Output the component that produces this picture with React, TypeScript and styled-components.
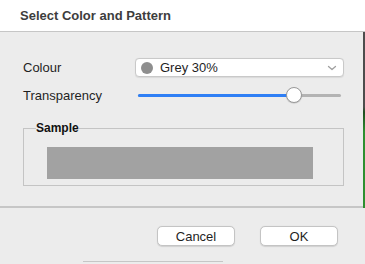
import React from "react";
import styled, { createGlobalStyle } from "styled-components";

const GlobalStyle = createGlobalStyle`
    html, body {
        margin: 0;
        padding: 0;
        background: #ececec;
    }
    body {
        font-family: "Liberation Sans", Arial, sans-serif;
        color: #1f1f1f;
    }
`;

const Window = styled.div`
    width: 365px;
    height: 264px;
    overflow: hidden;
    background: #ececec;
    display: flex;
    flex-direction: column;
`;

const TitleBar = styled.div`
    height: 32px;
    flex-shrink: 0;
    background: #ffffff;
    border-bottom: 1px solid #c6c6c6;
    box-sizing: border-box;
    padding-left: 20px;
    display: flex;
    align-items: center;
    font-size: 13px;
    font-weight: bold;
    color: #3d3d3d;
`;

const Body = styled.div`
    display: flex;
    height: 176px;
    flex-shrink: 0;
`;

const Panel = styled.div`
    flex: 1;
    box-sizing: border-box;
    padding: 26px 19px 0 23px;
    border-bottom: 2px solid #c6c6c6;
`;

const Edge = styled.div`
    width: 2px;
    background: linear-gradient(
        to bottom,
        #4d4d4d 0,
        #4d4d4d 75px,
        #1f4d1f 80px,
        #2f8f2f 100px,
        #2f8f2f 100%
    );
`;

const Row = styled.div<{ $gap?: number }>`
    display: grid;
    grid-template-columns: 112px 1fr;
    align-items: center;
    margin-bottom: ${(p) => p.$gap ?? 0}px;
`;

const Label = styled.div`
    font-size: 13px;
    color: #1f1f1f;
`;

const Select = styled.div`
    height: 19px;
    box-sizing: border-box;
    background: #ffffff;
    border: 1px solid #c9c9c9;
    border-radius: 4px;
    box-shadow: 0 0.5px 1px rgba(0, 0, 0, 0.08);
    display: flex;
    align-items: center;
    padding: 0 6px 0 5px;
    font-size: 13px;
`;

const Swatch = styled.span`
    width: 12px;
    height: 12px;
    border-radius: 50%;
    background: #8e8e8e;
    margin-right: 7px;
    flex-shrink: 0;
`;

const SelectText = styled.span`
    flex: 1;
`;

const SliderWrap = styled.div`
    position: relative;
    height: 16px;
    margin: 0 3px 0 3px;
    display: flex;
    align-items: center;
`;

const Track = styled.div`
    position: relative;
    width: 100%;
    height: 3px;
    border-radius: 2px;
    background: #b3b3b3;
`;

const Fill = styled.div`
    height: 100%;
    border-radius: 2px;
    background: #2f7ff5;
`;

const Thumb = styled.div`
    position: absolute;
    top: 0;
    width: 16px;
    height: 16px;
    box-sizing: border-box;
    border-radius: 50%;
    background: #ffffff;
    border: 1px solid #9a9a9a;
    box-shadow: 0 0.5px 1px rgba(0, 0, 0, 0.2);
    transform: translateX(-50%);
`;

const Group = styled.fieldset`
    margin: 0;
    padding: 14px 30px 6px 23px;
    border: 1px solid #c4c4c4;
    min-inline-size: 0;
`;

const Legend = styled.legend`
    padding: 0;
    margin-left: -11px;
    font-size: 12px;
    font-weight: bold;
    color: #111;
    line-height: 10px;
`;

const SampleBox = styled.div<{ $color: string }>`
    height: 32px;
    background: ${(p) => p.$color};
`;

const Footer = styled.div`
    display: flex;
    justify-content: flex-end;
    gap: 25px;
    padding: 18px 27px 0 0;
`;

const Button = styled.button`
    width: 78px;
    height: 20px;
    box-sizing: border-box;
    background: #ffffff;
    border: 1px solid #c4c4c4;
    border-radius: 5px;
    box-shadow: 0 0.5px 1px rgba(0, 0, 0, 0.12);
    font-family: "Liberation Sans", Arial, sans-serif;
    font-size: 13px;
    color: #1f1f1f;
    padding: 0;
`;

const BottomLine = styled.div`
    margin: 15px 0 0 83px;
    width: 140px;
    height: 1px;
    background: #c6c6c6;
`;

const Chevron: React.FC = () => (
    <svg width="10" height="6" viewBox="0 0 10 6">
        <polyline
            points="1.5,1.5 5,4.5 8.5,1.5"
            fill="none"
            stroke="#a0a0a0"
            strokeWidth="1.3"
            strokeLinecap="round"
            strokeLinejoin="round"
        />
    </svg>
);

const Slider: React.FC<{ value: number }> = ({ value }) => {
    const pct = `${value * 100}%`;
    return (
        <SliderWrap>
            <Track>
                <Fill style={{ width: pct }} />
            </Track>
            <Thumb style={{ left: pct }} />
        </SliderWrap>
    );
};

const App: React.FC = () => {
    return (
        <>
            <GlobalStyle />
            <Window>
                <TitleBar>Select Color and Pattern</TitleBar>
                <Body>
                    <Panel>
                        <Row $gap={10}>
                            <Label>Colour</Label>
                            <Select>
                                <Swatch />
                                <SelectText>Grey 30%</SelectText>
                                <Chevron />
                            </Select>
                        </Row>
                        <Row $gap={20}>
                            <Label>Transparency</Label>
                            <Slider value={0.77} />
                        </Row>
                        <Group>
                            <Legend>Sample</Legend>
                            <SampleBox $color="#a2a2a2" />
                        </Group>
                    </Panel>
                    <Edge />
                </Body>
                <Footer>
                    <Button>Cancel</Button>
                    <Button>OK</Button>
                </Footer>
                <BottomLine />
            </Window>
        </>
    );
};

export default App;
